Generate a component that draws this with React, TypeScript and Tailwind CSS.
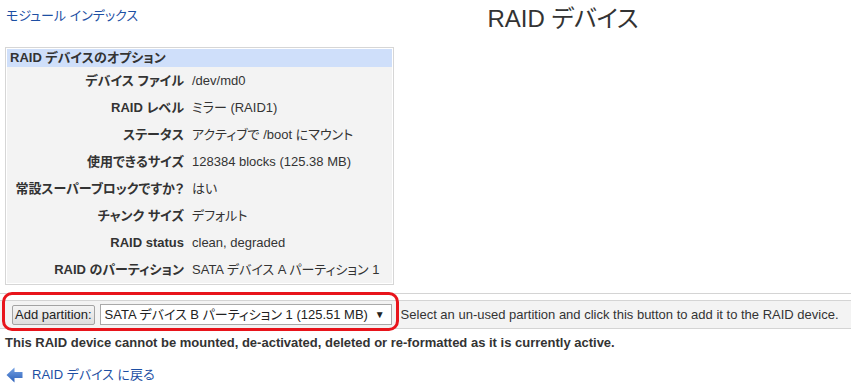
export default function App() {
  const rows: [string, string][] = [
    ['デバイス ファイル', '/dev/md0'],
    ['RAID レベル', 'ミラー (RAID1)'],
    ['ステータス', 'アクティブで /boot にマウント'],
    ['使用できるサイズ', '128384 blocks (125.38 MB)'],
    ['常設スーパーブロックですか？', 'はい'],
    ['チャンク サイズ', 'デフォルト'],
    ['RAID status', 'clean, degraded'],
    ['RAID のパーティション', 'SATA デバイス A パーティション 1'],
  ]

  return (
    <div className="relative w-[853px] h-[391px] overflow-hidden bg-white text-[13px] text-[#333] font-['Liberation_Sans','Noto_Sans_CJK_JP',sans-serif] [font-feature-settings:'palt']">
      {/* Header */}
      <div className="flex pt-[5px]">
        <div className="w-[273px] pl-[6px] pt-[3px] leading-[16px]">
          <a href="#" className="text-[#1d4fa3]">モジュール インデックス</a>
        </div>
        <h1 className="flex-1 text-center text-[24px] leading-[28px] font-normal text-[#333]">RAID デバイス</h1>
      </div>

      {/* Options table */}
      <div className="mt-[14px] ml-[5px] w-[389px] border border-[#d6d6d6] p-px bg-white">
        <div className="h-[18px] bg-[#cfdffa] pl-[3px] font-bold leading-[18px]">RAID デバイスのオプション</div>
        <div className="bg-[#f3f3f3]">
          {rows.map(([label, value]) => (
            <div key={label} className="flex h-[27px] items-center whitespace-nowrap">
              <div className="w-[177px] text-right font-bold">{label}</div>
              <div className="ml-[8px]">{value}</div>
            </div>
          ))}
        </div>
      </div>

      {/* Buttons */}
      <div className="mt-[8px] mr-[2px] h-px bg-[#d4d4d4]"></div>
      <div className="mt-[6px] mr-[2px] h-[29px] border-y border-[#d4d4d4] bg-[#f3f3f3] flex items-center pl-[12px] whitespace-nowrap">
        <button className="h-[20px] px-[2px] border border-[#a3a3a3] rounded-[2px] bg-gradient-to-b from-[#f4f4f4] to-[#dedede] text-[13px] leading-[18px] text-[#222]">
          Add partition:
        </button>
        <div className="ml-[5px] w-[292px] h-[21px] border border-[#a9a9a9] bg-white flex items-center justify-between pl-[4px] pr-[6px] text-[#222]">
          <span>SATA デバイス B パーティション 1 (125.51 MB)</span>
          <span className="text-[10px]">▼</span>
        </div>
        <div className="ml-[9px]">Select an un-used partition and click this button to add it to the RAID device.</div>
      </div>

      <div className="mt-[6px] pl-[5px] font-bold leading-[16px] whitespace-nowrap">
        This RAID device cannot be mounted, de-activated, deleted or re-formatted as it is currently active.
      </div>

      {/* Back link */}
      <div className="mt-[16px] pl-[6px] flex items-center h-[16px]">
        <svg width="17" height="16" viewBox="0 0 17 16">
          <defs>
            <linearGradient id="ag" x1="0" y1="0" x2="0" y2="1">
              <stop offset="0" stopColor="#75a2e4" />
              <stop offset="1" stopColor="#2b5fb8" />
            </linearGradient>
          </defs>
          <path d="M0.5 8 L8.5 0.5 V5 H16.5 V11 H8.5 V15.5 Z" fill="url(#ag)" />
        </svg>
        <a href="#" className="ml-[9px] text-[#1d4fa3]">RAID デバイス に戻る</a>
      </div>

      {/* Annotation */}
      <div className="absolute left-[2px] top-[292px] w-[397px] h-[39px] border-[3px] border-[#e8141b] rounded-[10px] pointer-events-none"></div>
    </div>
  )
}
